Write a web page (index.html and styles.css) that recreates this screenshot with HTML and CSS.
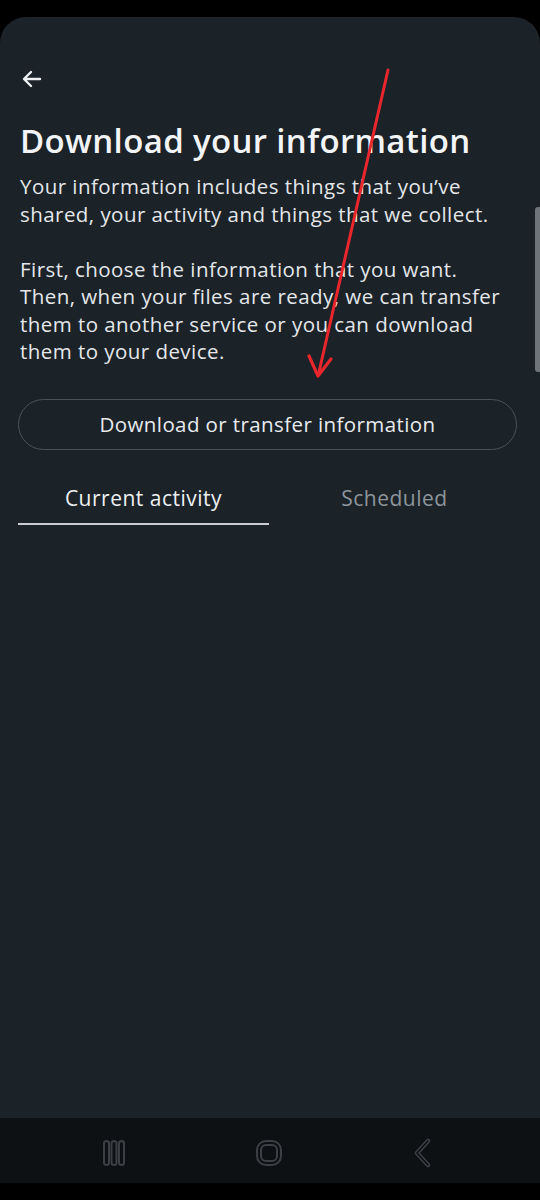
FILE: index.html
```html
<!DOCTYPE html>
<html>
<head>
<meta charset="utf-8">
<link rel="stylesheet" href="styles.css">
</head>
<body>
<div class="screen">
  <div class="status"></div>
  <main class="card">
    <div class="topbar">
      <svg class="back" width="24" height="24" viewBox="0 0 24 24"><path d="M20 12H5M11 5l-7 7 7 7" fill="none" stroke="#eef0f2" stroke-width="2.4" stroke-linecap="round" stroke-linejoin="round"/></svg>
    </div>
    <h1 class="title">Download your information</h1>
    <p class="text">Your information includes things that you’ve<br>shared, your activity and things that we collect.</p>
    <p class="text gap">First, choose the information that you want.<br>Then, when your files are ready, we can transfer<br>them to another service or you can download<br>them to your device.</p>
    <button class="btn">Download or transfer information</button>
    <div class="tabs">
      <div class="tab active">Current activity</div>
      <div class="tab">Scheduled</div>
    </div>
    <div class="scrollbar"></div>
    <svg class="annot" width="540" height="420" viewBox="0 0 540 420">
      <line x1="388" y1="70" x2="319" y2="372" stroke="#e8262b" stroke-width="3" stroke-linecap="round"/>
      <path d="M309 356 L318 376 L331 359" fill="none" stroke="#e8262b" stroke-width="3.2" stroke-linecap="round" stroke-linejoin="round"/>
    </svg>
  </main>
  <nav class="nav">
    <svg width="24" height="28" viewBox="0 0 24 28"><g fill="none" stroke="#3c4044" stroke-width="2"><rect x="2" y="2" width="5" height="24" rx="2.5"/><rect x="9.5" y="2" width="5" height="24" rx="2.5"/><rect x="17" y="2" width="5" height="24" rx="2.5"/></g></svg>
    <svg width="28" height="28" viewBox="0 0 28 28"><g fill="none" stroke="#3c4044" stroke-width="2"><rect x="2" y="2" width="24" height="24" rx="9"/><rect x="6" y="6" width="16" height="16" rx="5"/></g></svg>
    <svg width="22" height="30" viewBox="0 0 22 30"><path d="M16 3 L5 15 L16 27" fill="none" stroke="#3c4044" stroke-width="4.5" stroke-linecap="round" stroke-linejoin="round"/><path d="M16 3 L5 15 L16 27" fill="none" stroke="#0e1114" stroke-width="1.6" stroke-linecap="round" stroke-linejoin="round"/></svg>
  </nav>
  <div class="bottom"></div>
</div>
</body>
</html>
```
FILE: styles.css
```css
* { box-sizing: border-box; }
html, body { margin: 0; padding: 0; background: #000; }
body { font-family: "Open Sans", "Noto Sans", Arial, sans-serif; color: #eef0f2; }
.screen { width: 540px; height: 1200px; display: flex; flex-direction: column; overflow: hidden; }
.status { height: 17px; background: #000; flex: none; }
.card {
  position: relative;
  flex: none;
  height: 1101px;
  background: #1b2228;
  border-radius: 26px 26px 0 0;
  padding: 0 20px;
  display: flex;
  flex-direction: column;
}
.topbar { height: 92px; display: flex; align-items: flex-end; padding-bottom: 18px; }
.back { display: block; }
.title { margin: 10px 0 0; font-size: 33px; font-weight: 600; line-height: 44px; letter-spacing: 0.35px; color: #f2f4f6; white-space: nowrap; }
.text { margin: 10px 0 0; font-size: 20.5px; line-height: 27.5px; letter-spacing: 0.45px; color: #e4e7ea; white-space: nowrap; }
.text.gap { margin-top: 27.5px; }
.btn {
  margin: 33px 3px 0 -2px;
  height: 51px;
  border: 1.5px solid #4b5259;
  border-radius: 26px;
  background: transparent;
  color: #e8ebee;
  font-family: inherit;
  font-size: 20.5px;
  letter-spacing: 0.4px;
}
.tabs { display: flex; margin: 24px 0 0 -2px; }
.tab {
  flex: 1;
  text-align: center;
  font-size: 21px;
  height: 51px;
  line-height: 48px;
  letter-spacing: 0.5px;
  color: #8e959b;
  font-weight: 500;
}
.tab.active { color: #eef0f2; border-bottom: 2.5px solid #c9cdd1; }
.scrollbar {
  position: absolute;
  right: 0;
  top: 190px;
  width: 5px;
  height: 165px;
  background: #6e7479;
  border-radius: 3px 0 0 3px;
}
.annot { position: absolute; left: 0; top: -17px; pointer-events: none; }
.nav {
  flex: none;
  height: 65px;
  background: #0e1114;
  display: flex;
  align-items: center;
  justify-content: space-between;
  padding: 4px 106px 0 102px;
}
.bottom { flex: 1; background: #000; }
```
